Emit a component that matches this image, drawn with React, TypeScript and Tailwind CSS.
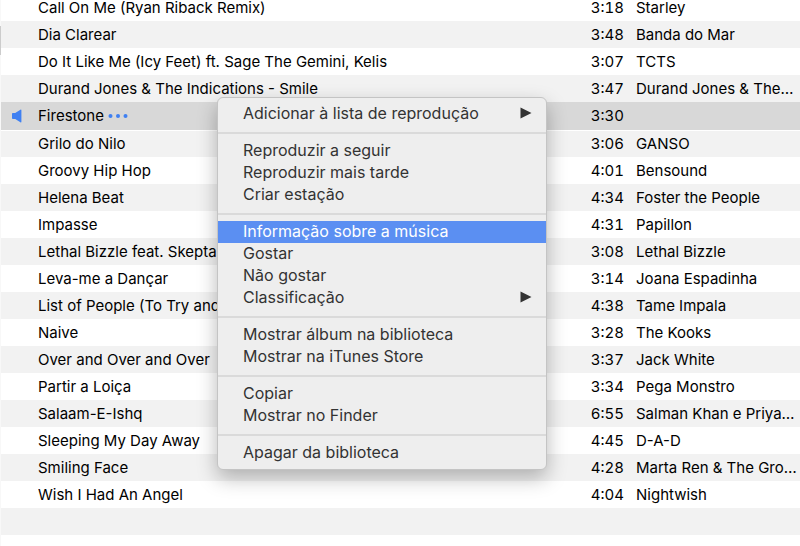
import React from 'react';

interface Track {
    title: string;
    time: string;
    artist: string;
}

interface MenuEntry {
    label: string;
    submenu?: boolean;
}

const TRACKS: Track[] = [
    { title: 'Call On Me (Ryan Riback Remix)', time: '3:18', artist: 'Starley' },
    { title: 'Dia Clarear', time: '3:48', artist: 'Banda do Mar' },
    { title: 'Do It Like Me (Icy Feet) ft. Sage The Gemini, Kelis', time: '3:07', artist: 'TCTS' },
    { title: 'Durand Jones & The Indications - Smile', time: '3:47', artist: 'Durand Jones & The…' },
    { title: 'Firestone', time: '3:30', artist: '' },
    { title: 'Grilo do Nilo', time: '3:06', artist: 'GANSO' },
    { title: 'Groovy Hip Hop', time: '4:01', artist: 'Bensound' },
    { title: 'Helena Beat', time: '4:34', artist: 'Foster the People' },
    { title: 'Impasse', time: '4:31', artist: 'Papillon' },
    { title: 'Lethal Bizzle feat. Skepta', time: '3:08', artist: 'Lethal Bizzle' },
    { title: 'Leva-me a Dançar', time: '3:14', artist: 'Joana Espadinha' },
    { title: 'List of People (To Try and', time: '4:38', artist: 'Tame Impala' },
    { title: 'Naive', time: '3:28', artist: 'The Kooks' },
    { title: 'Over and Over and Over', time: '3:37', artist: 'Jack White' },
    { title: 'Partir a Loiça', time: '3:34', artist: 'Pega Monstro' },
    { title: 'Salaam-E-Ishq', time: '6:55', artist: 'Salman Khan e Priya…' },
    { title: 'Sleeping My Day Away', time: '4:45', artist: 'D-A-D' },
    { title: 'Smiling Face', time: '4:28', artist: 'Marta Ren & The Gro…' },
    { title: 'Wish I Had An Angel', time: '4:04', artist: 'Nightwish' },
    { title: '', time: '', artist: '' },
];

const MENU: MenuEntry[][] = [
    [{ label: 'Adicionar à lista de reprodução', submenu: true }],
    [{ label: 'Reproduzir a seguir' }, { label: 'Reproduzir mais tarde' }, { label: 'Criar estação' }],
    [
        { label: 'Informação sobre a música' },
        { label: 'Gostar' },
        { label: 'Não gostar' },
        { label: 'Classificação', submenu: true },
    ],
    [{ label: 'Mostrar álbum na biblioteca' }, { label: 'Mostrar na iTunes Store' }],
    [{ label: 'Copiar' }, { label: 'Mostrar no Finder' }],
    [{ label: 'Apagar da biblioteca' }],
];

const PLAYING = 'Firestone';
const ACTIVE_ITEM = 'Informação sobre a música';

const SpeakerIcon = () => (
    <svg className="ml-auto block" width="10" height="14" viewBox="0 0 10 14" fill="#3f80f2" aria-hidden="true">
        <path d="M0.8 4H3.2L8.4 0.8Q9.4 0.3 9.4 1.2V12.8Q9.4 13.7 8.4 13.2L3.2 10H0.8Q0 10 0 9.2V4.8Q0 4 0.8 4Z" />
    </svg>
);

const DotsIcon = () => (
    <svg width="20" height="6" viewBox="0 0 20 6" fill="#3f80f2" aria-hidden="true">
        <circle cx="2.5" cy="3" r="2" />
        <circle cx="10" cy="3" r="2" />
        <circle cx="17.5" cy="3" r="2" />
    </svg>
);

const TrackRow: React.FC<{ track: Track }> = ({ track }) => {
    const playing = track.title === PLAYING;

    return (
        <tr className={playing ? 'h-7 border-b border-white bg-[#d8d8d8]' : 'h-[27px] odd:bg-white even:bg-[#f2f2f2]'}>
            <td className="p-0 pr-4">{playing && <SpeakerIcon />}</td>
            <td className="truncate p-0">
                {playing ? (
                    <span className="flex items-center gap-1">
                        {track.title}
                        <button type="button" aria-label="Mais opções">
                            <DotsIcon />
                        </button>
                    </span>
                ) : (
                    track.title
                )}
            </td>
            <td className="p-0 pr-3 text-right tabular-nums">{track.time}</td>
            <td className="p-0 whitespace-nowrap">{track.artist}</td>
        </tr>
    );
};

const ContextMenu = () => (
    <div
        role="menu"
        className="absolute top-[97px] left-[217px] w-[330px] rounded-md border border-[#c4c4c4] bg-[#eeeeee] py-[5px] text-base text-[#333333] shadow-[0_8px_20px_rgba(0,0,0,0.28)]"
    >
        {MENU.map((group, i) => (
            <React.Fragment key={i}>
                {i > 0 && (
                    <div role="separator" className="flex h-[15px] items-center">
                        <div className="h-0.5 w-full bg-[#dadada]" />
                    </div>
                )}
                {group.map((item) => (
                    <button
                        key={item.label}
                        type="button"
                        role="menuitem"
                        className={`flex h-[22px] w-full items-center justify-between pr-3.5 pb-0.5 pl-[25px] text-left leading-5 ${item.label === ACTIVE_ITEM ? 'bg-[#5b8ff2] text-white' : ''}`}
                    >
                        {item.label}
                        {item.submenu && (
                            <svg width="12" height="12" viewBox="0 0 12 12" fill="#333333" aria-hidden="true">
                                <path d="M0.5 0.5L11.5 6L0.5 11.5Z" />
                            </svg>
                        )}
                    </button>
                ))}
            </React.Fragment>
        ))}
    </div>
);

export default function App() {
    return (
        <main className="relative flex h-screen overflow-hidden bg-white font-['Inter','Liberation_Sans',sans-serif]">
            {/* Sidebar edge with its scroll thumb */}
            <div className="w-px shrink-0 bg-[#f8f8f8] pt-[26px]">
                <div className="h-[29px] bg-[#cccccc]" />
            </div>

            {/* The list is scrolled a little past the top of the first row */}
            <div className="-mt-1.5 min-w-0 flex-1">
                <table className="w-full table-fixed border-collapse text-[15px] leading-5 text-black">
                    <colgroup>
                        <col className="w-[37px]" />
                        <col />
                        <col className="w-[60px]" />
                        <col className="w-[164px]" />
                    </colgroup>
                    <tbody>
                        {TRACKS.map((track, i) => (
                            <TrackRow key={i} track={track} />
                        ))}
                    </tbody>
                </table>
            </div>

            <ContextMenu />
        </main>
    );
}
